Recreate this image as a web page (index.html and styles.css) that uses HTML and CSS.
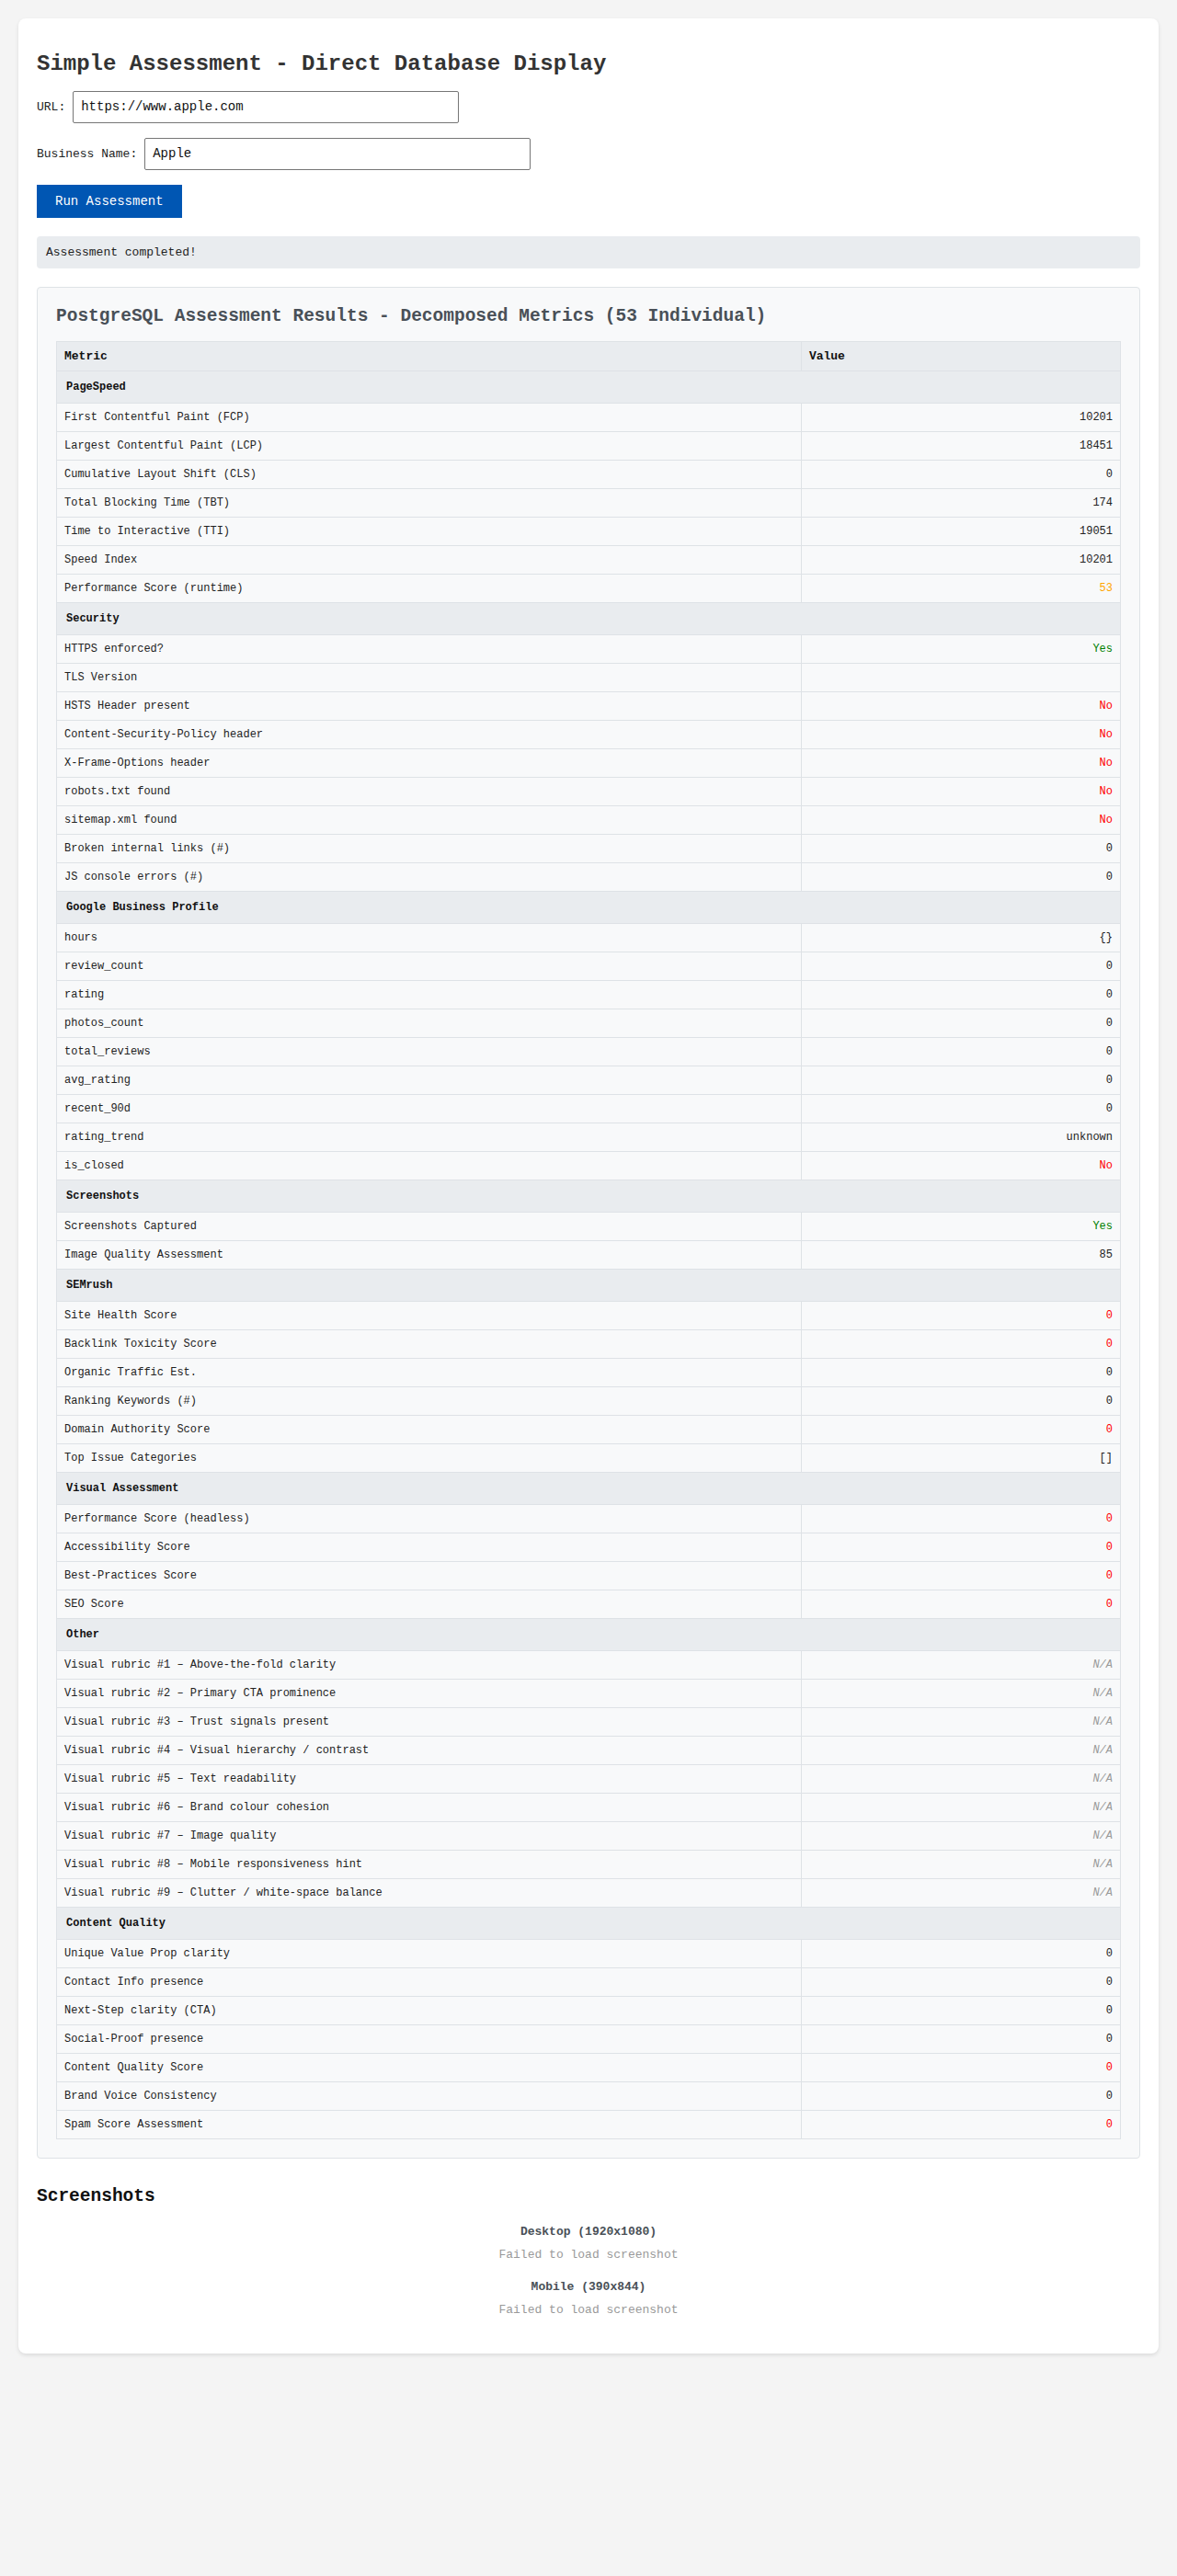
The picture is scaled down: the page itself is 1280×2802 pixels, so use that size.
FILE: index.html
```html
<!DOCTYPE html>
<html lang="en">
<head>
<meta charset="utf-8">
<title>Simple Assessment - Direct Database Display</title>
<link rel="stylesheet" href="styles.css">
</head>
<body>
<div class="container">
  <h1 class="page-title">Simple Assessment - Direct Database Display</h1>

  <div class="form-group">
    <label class="form-label" for="url">URL:</label>
    <input class="form-input" id="url" type="text" value="https://www.apple.com">
  </div>
  <div class="form-group">
    <label class="form-label" for="biz">Business Name:</label>
    <input class="form-input" id="biz" type="text" value="Apple">
  </div>
  <button class="run-btn" type="button">Run Assessment</button>

  <div class="status">Assessment completed!</div>

  <section class="results">
    <h3 class="results-title">PostgreSQL Assessment Results - Decomposed Metrics (53 Individual)</h3>
    <table class="metrics">
      <colgroup><col class="col-metric"><col class="col-value"></colgroup>
      <thead>
        <tr><th>Metric</th><th>Value</th></tr>
      </thead>
      <tbody>
        <tr class="cat"><td colspan="2">PageSpeed</td></tr>
        <tr><td>First Contentful Paint (FCP)</td><td class="val">10201</td></tr>
        <tr><td>Largest Contentful Paint (LCP)</td><td class="val">18451</td></tr>
        <tr><td>Cumulative Layout Shift (CLS)</td><td class="val">0</td></tr>
        <tr><td>Total Blocking Time (TBT)</td><td class="val">174</td></tr>
        <tr><td>Time to Interactive (TTI)</td><td class="val">19051</td></tr>
        <tr><td>Speed Index</td><td class="val">10201</td></tr>
        <tr><td>Performance Score (runtime)</td><td class="val warn">53</td></tr>

        <tr class="cat"><td colspan="2">Security</td></tr>
        <tr><td>HTTPS enforced?</td><td class="val good">Yes</td></tr>
        <tr><td>TLS Version</td><td class="val"></td></tr>
        <tr><td>HSTS Header present</td><td class="val bad">No</td></tr>
        <tr><td>Content-Security-Policy header</td><td class="val bad">No</td></tr>
        <tr><td>X-Frame-Options header</td><td class="val bad">No</td></tr>
        <tr><td>robots.txt found</td><td class="val bad">No</td></tr>
        <tr><td>sitemap.xml found</td><td class="val bad">No</td></tr>
        <tr><td>Broken internal links (#)</td><td class="val">0</td></tr>
        <tr><td>JS console errors (#)</td><td class="val">0</td></tr>

        <tr class="cat"><td colspan="2">Google Business Profile</td></tr>
        <tr><td>hours</td><td class="val">{}</td></tr>
        <tr><td>review_count</td><td class="val">0</td></tr>
        <tr><td>rating</td><td class="val">0</td></tr>
        <tr><td>photos_count</td><td class="val">0</td></tr>
        <tr><td>total_reviews</td><td class="val">0</td></tr>
        <tr><td>avg_rating</td><td class="val">0</td></tr>
        <tr><td>recent_90d</td><td class="val">0</td></tr>
        <tr><td>rating_trend</td><td class="val">unknown</td></tr>
        <tr><td>is_closed</td><td class="val bad">No</td></tr>

        <tr class="cat"><td colspan="2">Screenshots</td></tr>
        <tr><td>Screenshots Captured</td><td class="val good">Yes</td></tr>
        <tr><td>Image Quality Assessment</td><td class="val">85</td></tr>

        <tr class="cat"><td colspan="2">SEMrush</td></tr>
        <tr><td>Site Health Score</td><td class="val bad">0</td></tr>
        <tr><td>Backlink Toxicity Score</td><td class="val bad">0</td></tr>
        <tr><td>Organic Traffic Est.</td><td class="val">0</td></tr>
        <tr><td>Ranking Keywords (#)</td><td class="val">0</td></tr>
        <tr><td>Domain Authority Score</td><td class="val bad">0</td></tr>
        <tr><td>Top Issue Categories</td><td class="val">[]</td></tr>

        <tr class="cat"><td colspan="2">Visual Assessment</td></tr>
        <tr><td>Performance Score (headless)</td><td class="val bad">0</td></tr>
        <tr><td>Accessibility Score</td><td class="val bad">0</td></tr>
        <tr><td>Best-Practices Score</td><td class="val bad">0</td></tr>
        <tr><td>SEO Score</td><td class="val bad">0</td></tr>

        <tr class="cat"><td colspan="2">Other</td></tr>
        <tr><td>Visual rubric #1 – Above-the-fold clarity</td><td class="val na">N/A</td></tr>
        <tr><td>Visual rubric #2 – Primary CTA prominence</td><td class="val na">N/A</td></tr>
        <tr><td>Visual rubric #3 – Trust signals present</td><td class="val na">N/A</td></tr>
        <tr><td>Visual rubric #4 – Visual hierarchy / contrast</td><td class="val na">N/A</td></tr>
        <tr><td>Visual rubric #5 – Text readability</td><td class="val na">N/A</td></tr>
        <tr><td>Visual rubric #6 – Brand colour cohesion</td><td class="val na">N/A</td></tr>
        <tr><td>Visual rubric #7 – Image quality</td><td class="val na">N/A</td></tr>
        <tr><td>Visual rubric #8 – Mobile responsiveness hint</td><td class="val na">N/A</td></tr>
        <tr><td>Visual rubric #9 – Clutter / white-space balance</td><td class="val na">N/A</td></tr>

        <tr class="cat"><td colspan="2">Content Quality</td></tr>
        <tr><td>Unique Value Prop clarity</td><td class="val">0</td></tr>
        <tr><td>Contact Info presence</td><td class="val">0</td></tr>
        <tr><td>Next-Step clarity (CTA)</td><td class="val">0</td></tr>
        <tr><td>Social-Proof presence</td><td class="val">0</td></tr>
        <tr><td>Content Quality Score</td><td class="val bad">0</td></tr>
        <tr><td>Brand Voice Consistency</td><td class="val">0</td></tr>
        <tr><td>Spam Score Assessment</td><td class="val bad">0</td></tr>
      </tbody>
    </table>
  </section>

  <section class="shots">
    <h3 class="shots-title">Screenshots</h3>
    <div class="shot">
      <div class="shot-label">Desktop (1920x1080)</div>
      <div class="shot-error">Failed to load screenshot</div>
    </div>
    <div class="shot">
      <div class="shot-label">Mobile (390x844)</div>
      <div class="shot-error">Failed to load screenshot</div>
    </div>
  </section>
</div>
</body>
</html>
```

FILE: styles.css
```css
* { box-sizing: border-box; }

body {
  margin: 0;
  padding: 20px;
  background: #f4f4f4;
  font-family: "Liberation Mono", "DejaVu Sans Mono", monospace;
  color: #222;
}

.container {
  background: #fff;
  border-radius: 8px;
  box-shadow: 0 2px 4px rgba(0, 0, 0, 0.1);
  padding: 20px 20px 0;
  display: flow-root;
}

.page-title {
  font-size: 24px;
  font-weight: bold;
  color: #333;
  margin: 16px 0;
  line-height: 27px;
}

.form-group {
  display: flex;
  align-items: center;
  gap: 8px;
  margin-bottom: 16px;
}

.form-label {
  font-size: 13px;
  color: #222;
}

.form-input {
  width: 420px;
  padding: 8px;
  font-family: "Liberation Mono", monospace;
  font-size: 14px;
  line-height: 17px;
  border: 1px solid #767676;
  border-radius: 2px;
  color: #111;
  background: #fff;
}

.run-btn {
  display: block;
  background: #0056b3;
  color: #fff;
  border: none;
  padding: 10px 20px;
  font-family: "Liberation Mono", monospace;
  font-size: 14px;
  line-height: 16px;
  cursor: pointer;
}

.status {
  margin-top: 20px;
  background: #e9ecef;
  border-radius: 4px;
  padding: 10px;
  font-size: 13px;
  line-height: 15px;
  color: #222;
}

.results {
  margin-top: 20px;
  background: #f8f9fa;
  border: 1px solid #dee2e6;
  border-radius: 4px;
  padding: 20px;
}

.results-title {
  margin: 0 0 16px;
  font-size: 19.5px;
  line-height: 22px;
  font-weight: bold;
  color: #495057;
}

.metrics {
  width: 100%;
  border-collapse: collapse;
  font-size: 12px;
}

.col-metric { width: 70%; }
.col-value { width: 30%; }

.metrics th,
.metrics td {
  border: 1px solid #dee2e6;
  padding: 8px;
  text-align: left;
  line-height: 14px;
  color: #222;
}

.metrics th {
  background: #e9ecef;
  font-size: 13px;
  line-height: 15px;
  font-weight: bold;
  color: #111;
}

.metrics tr.cat td {
  background: #e9ecef;
  font-weight: bold;
  padding: 10px;
  color: #111;
}

.metrics td.val { text-align: right; }
.metrics td.good { color: #008000; }
.metrics td.bad { color: #ff0000; }
.metrics td.warn { color: #ffa500; }
.metrics td.na { color: #999; font-style: italic; }

.shots {
  margin-top: 30px;
}

.shots-title {
  margin: 0 0 20px;
  font-size: 19.5px;
  line-height: 22px;
  font-weight: bold;
  color: #111;
}

.shot {
  text-align: center;
  margin-bottom: 20px;
}

.shots .shot:last-child { margin-bottom: 40px; }

.shot-label {
  font-size: 13px;
  line-height: 15px;
  font-weight: bold;
  color: #495057;
  margin-bottom: 10px;
}

.shot-error {
  font-size: 13px;
  line-height: 15px;
  color: #999;
}
```
